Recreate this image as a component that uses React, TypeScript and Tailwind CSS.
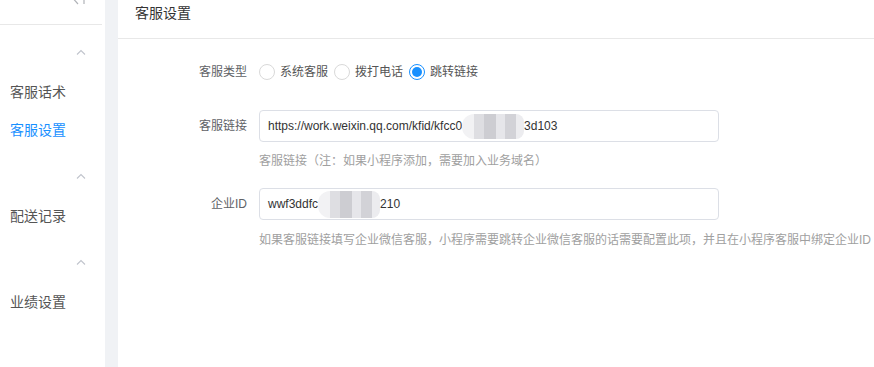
import React from 'react';

const font = { fontFamily: '"Liberation Sans", "Noto Sans CJK SC", sans-serif' };

function Chevron() {
  return (
    <svg width="10" height="6" viewBox="0 0 10 6" fill="none">
      <path d="M1 5.5 L5 1.5 L9 5.5" stroke="#c0c4cc" strokeWidth="1.1" />
    </svg>
  );
}

function SideGroup({ items, active }: { items: string[]; active?: string }) {
  return (
    <div>
      <div className="h-[48px] flex justify-end pr-[19px] pt-[24px]">
        <Chevron />
      </div>
      {items.map((t) => (
        <div
          key={t}
          className={`h-[38px] flex items-center pl-[10px] text-[14px] ${
            t === active ? 'text-[#1890ff]' : 'text-[#555]'
          }`}
        >
          {t}
        </div>
      ))}
    </div>
  );
}

function Radio({ label, checked }: { label: string; checked?: boolean }) {
  return (
    <label className="flex items-center gap-[5px] mr-[6px]">
      {checked ? (
        <span className="w-[16px] h-[16px] rounded-full border border-[#1890ff] flex items-center justify-center">
          <span className="w-[10px] h-[10px] rounded-full bg-[#1890ff]" />
        </span>
      ) : (
        <span className="w-[16px] h-[16px] rounded-full border border-[#d9d9d9] bg-white" />
      )}
      <span className="text-[12px] text-[#555]">{label}</span>
    </label>
  );
}

// redacted part of a value
function Blur({ h }: { h: string }) {
  return (
    <span className={`inline-flex ${h}`}>
      <span className="w-[12px] bg-[#f2f2f4] rounded-l-full" />
      <span className="w-[10px] bg-[#dedee2]" />
      <span className="w-[12px] bg-[#cdcdd2]" />
      <span className="w-[9px] bg-[#e6e6ea]" />
      <span className="w-[11px] bg-[#d2d2d7]" />
      <span className="w-[8px] bg-[#ececef] rounded-r-full" />
    </span>
  );
}

export default function App() {
  return (
    <div className="flex w-[874px] h-[367px] bg-white overflow-hidden" style={font}>
      {/* Sidebar */}
      <div className="w-[105px] shrink-0 bg-white">
        <div className="h-[25px] mr-[3px] border-b border-[#e8e8e8] relative">
          <svg className="absolute left-[72px] -top-[6px]" width="14" height="11" viewBox="0 0 14 11" fill="none">
            <path d="M6 1 L2 5.5 L6 10" stroke="#b0b3b8" strokeWidth="1.2" />
            <path d="M12 1 L12 10" stroke="#b0b3b8" strokeWidth="1.2" />
          </svg>
        </div>
        <SideGroup items={['客服话术', '客服设置']} active="客服设置" />
        <SideGroup items={['配送记录']} />
        <SideGroup items={['业绩设置']} />
      </div>

      <div className="w-[13px] shrink-0 bg-[#f0f2f5]" />

      {/* Main */}
      <div className="flex-1 bg-white">
        <div className="h-[39px] border-b border-[#e8e8e8] pl-[17px]">
          <div className="leading-[26px] text-[14px] text-[#333]">客服设置</div>
        </div>

        <div className="pl-[29px] pt-[22px]">
          <div className="flex items-center h-[22px]">
            <div className="w-[100px] text-right text-[12px] text-[#606266]">客服类型</div>
            <div className="flex items-center ml-[12px]">
              <Radio label="系统客服" />
              <Radio label="拨打电话" />
              <Radio label="跳转链接" checked />
            </div>
          </div>

          <div className="flex items-center mt-[27px]">
            <div className="w-[100px] text-right text-[12px] text-[#606266]">客服链接</div>
            <div className="ml-[12px] w-[460px] h-[32px] border border-[#dcdfe6] rounded-[4px] flex items-center px-[8px] text-[12px] text-[#333] whitespace-nowrap">
              https://work.weixin.qq.com/kfid/kfcc0
              <Blur h="h-[25px]" />
              3d103
            </div>
          </div>
          <div className="ml-[112px] mt-[9px] text-[12px] text-[#a0a0a0] leading-[20px]">
            客服链接（注：如果小程序添加，需要加入业务域名）
          </div>

          <div className="flex items-center mt-[17px]">
            <div className="w-[100px] text-right text-[12px] text-[#606266]">企业ID</div>
            <div className="ml-[12px] w-[460px] h-[32px] border border-[#dcdfe6] rounded-[4px] flex items-center px-[8px] text-[12px] text-[#333] whitespace-nowrap">
              wwf3ddfc
              <Blur h="h-[27px]" />
              210
            </div>
          </div>
          <div className="ml-[112px] mt-[10px] text-[12px] text-[#a0a0a0] leading-[20px] whitespace-nowrap">
            如果客服链接填写企业微信客服，小程序需要跳转企业微信客服的话需要配置此项，并且在小程序客服中绑定企业ID
          </div>
        </div>
      </div>
    </div>
  );
}
